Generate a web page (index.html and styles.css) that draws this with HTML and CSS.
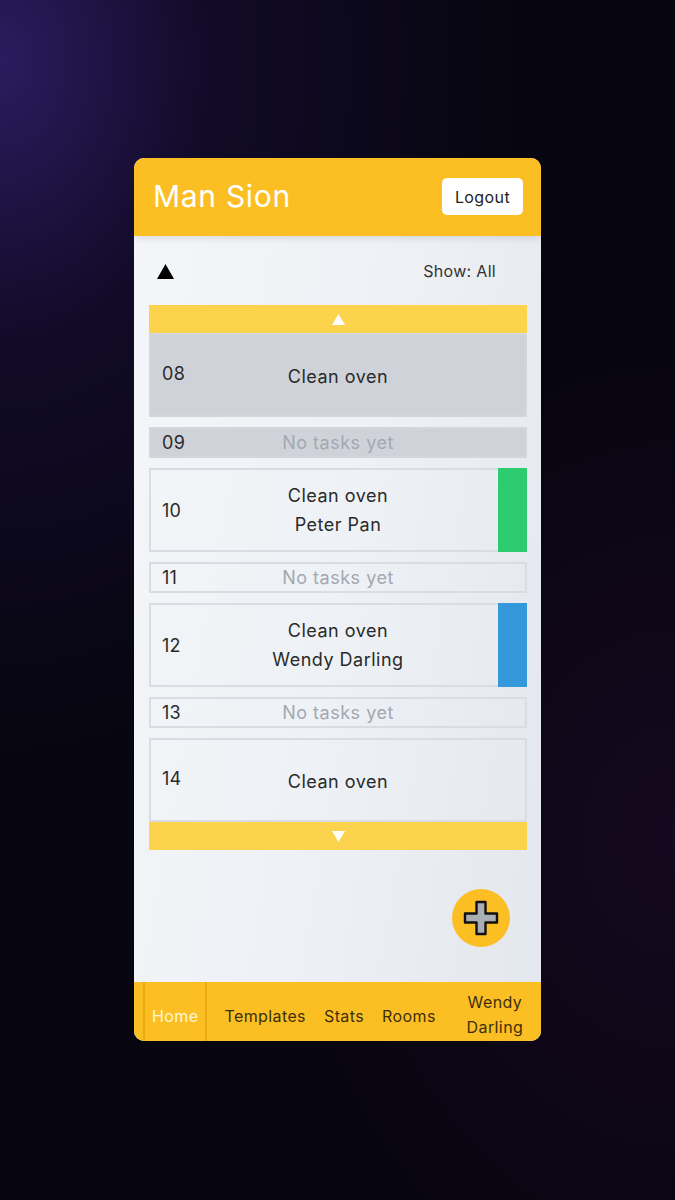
FILE: index.html
```html
<!DOCTYPE html>
<html lang="en">
<head>
<meta charset="utf-8">
<title>Man Sion</title>
<link rel="stylesheet" href="styles.css">
</head>
<body>
<div class="app">
  <header class="app-header">
    <h1 class="app-title">Man Sion</h1>
    <button class="logout-btn">Logout</button>
  </header>
  <main class="app-main">
    <div class="toolbar">
      <svg class="sort-icon" width="17" height="15" viewBox="0 0 17 15"><polygon points="8.5,0 17,15 0,15" fill="#000"/></svg>
      <span class="show-filter">Show: All</span>
    </div>
    <div class="schedule">
      <div class="scroll-bar"><svg width="13" height="11" viewBox="0 0 13 11"><polygon points="6.5,0 13,11 0,11" fill="#fff"/></svg></div>
      <div class="slot slot-tall slot-past slot-first">
        <span class="slot-hour raised">08</span>
        <div class="slot-task"><div>Clean oven</div></div>
        <span></span>
      </div>
      <div class="slot slot-short slot-past">
        <span class="slot-hour">09</span>
        <div class="slot-empty">No tasks yet</div>
        <span></span>
      </div>
      <div class="slot slot-tall">
        <span class="slot-hour">10</span>
        <div class="slot-task"><div>Clean oven</div><div>Peter Pan</div></div>
        <span class="slot-color green"></span>
      </div>
      <div class="slot slot-short">
        <span class="slot-hour">11</span>
        <div class="slot-empty">No tasks yet</div>
        <span></span>
      </div>
      <div class="slot slot-tall">
        <span class="slot-hour">12</span>
        <div class="slot-task"><div>Clean oven</div><div>Wendy Darling</div></div>
        <span class="slot-color blue"></span>
      </div>
      <div class="slot slot-short">
        <span class="slot-hour">13</span>
        <div class="slot-empty">No tasks yet</div>
        <span></span>
      </div>
      <div class="slot slot-tall">
        <span class="slot-hour raised">14</span>
        <div class="slot-task"><div>Clean oven</div></div>
        <span></span>
      </div>
      <div class="scroll-bar"><svg width="13" height="11" viewBox="0 0 13 11"><polygon points="0,0 13,0 6.5,11" fill="#fff"/></svg></div>
    </div>
    <button class="fab" aria-label="Add task">
      <svg width="36" height="36" viewBox="0 0 36 36"><path d="M13.5 2 H22.5 V13.5 H34 V22.5 H22.5 V34 H13.5 V22.5 H2 V13.5 H13.5 Z" fill="#a9adb4" stroke="#111" stroke-width="2.4" stroke-linejoin="round"/></svg>
    </button>
  </main>
  <nav class="app-nav">
    <a class="nav-item active">Home</a>
    <a class="nav-item first-link">Templates</a>
    <a class="nav-item">Stats</a>
    <a class="nav-item">Rooms</a>
    <a class="nav-item user">Wendy Darling</a>
  </nav>
</div>
</body>
</html>
```

FILE: styles.css
```css
* { box-sizing: border-box; }
html, body { margin: 0; padding: 0; }
body {
  width: 675px;
  height: 1200px;
  display: flex;
  align-items: flex-start;
  justify-content: center;
  padding-top: 158px;
  font-family: Inter, "Noto Sans", sans-serif;
  background:
    radial-gradient(ellipse 520px 700px at 0% 5%, rgba(50, 34, 115, 0.8) 0%, rgba(30, 18, 70, 0.45) 40%, rgba(0,0,0,0) 100%),
    radial-gradient(ellipse 400px 500px at 100% 70%, rgba(40, 12, 50, 0.45) 0%, rgba(0,0,0,0) 100%),
    #07050f;
}
.app {
  width: 407px;
  height: 883px;
  border-radius: 10px;
  overflow: hidden;
  display: flex;
  flex-direction: column;
  background: linear-gradient(100deg, #f4f6f9 0%, #eef1f5 50%, #e3e7ee 100%);
}
.app-header {
  height: 78px;
  flex: none;
  background: #fbbf24;
  display: flex;
  align-items: center;
  justify-content: space-between;
  padding: 0 18px 0 19px;
  box-shadow: 0 2px 8px rgba(0,0,0,0.12);
  position: relative;
  z-index: 1;
}
.app-title {
  margin: 0;
  color: #fff;
  font-size: 30px;
  font-weight: 400;
  letter-spacing: 0.7px;
  margin-top: -2px;
}
.logout-btn {
  width: 81px;
  height: 37px;
  border: none;
  border-radius: 5px;
  background: #fff;
  color: #222;
  font-family: Inter, sans-serif;
  font-size: 16px;
  letter-spacing: 0.4px;
  padding: 0;
  margin-top: -1px;
}
.app-main {
  flex: 1;
  position: relative;
  padding: 0 14px 0 15px;
}
.toolbar {
  height: 69px;
  display: flex;
  align-items: center;
  justify-content: space-between;
  padding: 0 31px 0 8px;
}
.sort-icon { display: block; margin-top: 2px; }
.show-filter {
  font-size: 16px;
  letter-spacing: 0.3px;
  color: #333;
}
.schedule {
  display: flex;
  flex-direction: column;
}
.scroll-bar {
  height: 28px;
  background: #fcd34d;
  display: flex;
  align-items: center;
  justify-content: center;
}
.slot {
  display: grid;
  grid-template-columns: 70px 1fr 70px;
  align-items: center;
  border: 2px solid #d9dde3;
  margin-top: 10px;
  color: #2a2a2a;
  font-size: 18px;
  letter-spacing: 0.5px;
}
.slot-first { margin-top: 0; }
.slot-tall { height: 84px; }
.slot-short { height: 31px; }
.slot-past {
  background: #cfd3d9;
  border-color: #d3d6dc;
}
.slot-hour {
  padding-left: 11px;
  letter-spacing: 0.3px;
}
.slot-hour.raised { margin-top: -4px; }
.slot-task {
  text-align: center;
  line-height: 29px;
}
.slot-tall .slot-task div:only-child { margin-top: 2px; }
.slot-empty {
  text-align: center;
  color: #a3a8b0;
}
.slot-short .slot-hour, .slot-short .slot-empty { line-height: 27px; }
.slot-color {
  justify-self: end;
  align-self: stretch;
  width: 29px;
  margin: -2px -2px -2px 0;
}
.slot-color.green { background: #2ecc71; }
.slot-color.blue { background: #3498db; }
.fab {
  position: absolute;
  right: 31px;
  bottom: 35px;
  width: 58px;
  height: 58px;
  border-radius: 50%;
  border: none;
  background: #fbbf24;
  display: flex;
  align-items: center;
  justify-content: center;
  padding: 0;
}
.fab svg { display: block; }
.app-nav {
  height: 59px;
  flex: none;
  background: #fbbf24;
  display: flex;
  align-items: stretch;
  padding-left: 9px;
  font-size: 16px;
  letter-spacing: 0.4px;
}
.nav-item {
  display: flex;
  align-items: center;
  justify-content: center;
  padding: 10px 9px 0;
  color: #3d2f08;
  line-height: 25px;
}
.nav-item.active {
  color: #fff6d6;
  border-left: 2px solid #eaaa12;
  border-right: 2px solid #eaaa12;
  padding: 10px 7px 0;
}
.first-link { margin-left: 8px; }
.nav-item.user {
  flex: 1;
  text-align: center;
  padding: 6px 14px 0 18px;
}
```
